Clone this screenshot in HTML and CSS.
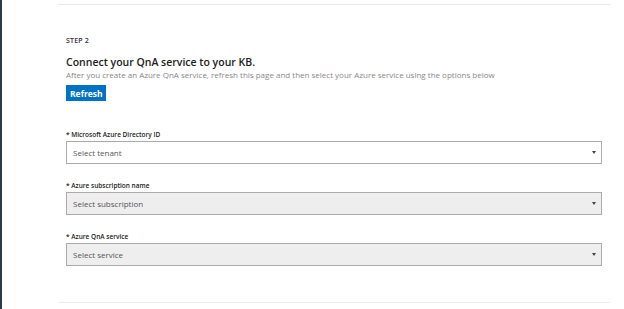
FILE: index.html
```html
<!DOCTYPE html>
<html lang="en">
<head>
  <meta charset="UTF-8" />
  <title>Connect QnA service</title>
  <link rel="stylesheet" href="styles.css">
</head>
<body>
  <div class="page">
    <section class="step">
      <div class="step-label">STEP 2</div>
      <h2 class="step-title">Connect your QnA service to your KB.</h2>
      <p class="step-desc">After you create an Azure QnA service, refresh this page and then select your Azure service using the options below</p>
      <button class="btn">Refresh</button>

      <div class="field">
        <label class="field-label">* Microsoft Azure Directory ID</label>
        <div class="select">Select tenant<span class="arrow"></span></div>
      </div>

      <div class="field">
        <label class="field-label">* Azure subscription name</label>
        <div class="select disabled">Select subscription<span class="arrow"></span></div>
      </div>

      <div class="field">
        <label class="field-label">* Azure QnA service</label>
        <div class="select disabled">Select service<span class="arrow"></span></div>
      </div>
    </section>
  </div>
</body>
</html>
```

FILE: styles.css
```css
* {
  margin: 0;
  padding: 0;
  box-sizing: border-box;
  font-family: 'Open Sans', sans-serif;
}

body {
  height: 100vh;
  background: #fff;
  border-left: 2px solid #2e3b48;
  overflow: hidden;
  color: #222;
}

.page {
  margin-left: 56px;
  width: 552px;
  padding-top: 4px;
}

.step {
  border-top: 1px solid #e8e8e8;
  border-bottom: 1px solid #ececec;
  padding: 31px 8px 36px 8px;
}

.step-label {
  font-size: 7px;
  font-weight: 600;
  letter-spacing: 0.2px;
  color: #333;
}

.step-title {
  font-size: 10.5px;
  font-weight: 600;
  margin-top: 10px;
  line-height: 14px;
  color: #222;
}

.step-desc {
  font-size: 8px;
  line-height: 11px;
  color: #888;
}

.btn {
  display: block;
  margin-top: 5px;
  background: #0072c6;
  color: #fff;
  border: none;
  font-size: 8.5px;
  font-weight: 700;
  padding: 3px 4px;
  height: 16px;
  width: 40px;
}

.field {
  margin-top: 29px;
}

.field + .field {
  margin-top: 17px;
}

.field-label {
  display: block;
  font-size: 6.5px;
  line-height: 9px;
  font-weight: 600;
  color: #222;
  margin-bottom: 2px;
}

.select {
  position: relative;
  height: 23px;
  border: 1px solid #ababab;
  background: #fff;
  font-size: 8px;
  color: #555;
  padding: 5px 6px;
}

.select.disabled {
  background: #eeeeee;
}

.arrow {
  position: absolute;
  right: 5px;
  top: 9px;
  border-left: 2px solid transparent;
  border-right: 2px solid transparent;
  border-top: 3px solid #444;
}
```
